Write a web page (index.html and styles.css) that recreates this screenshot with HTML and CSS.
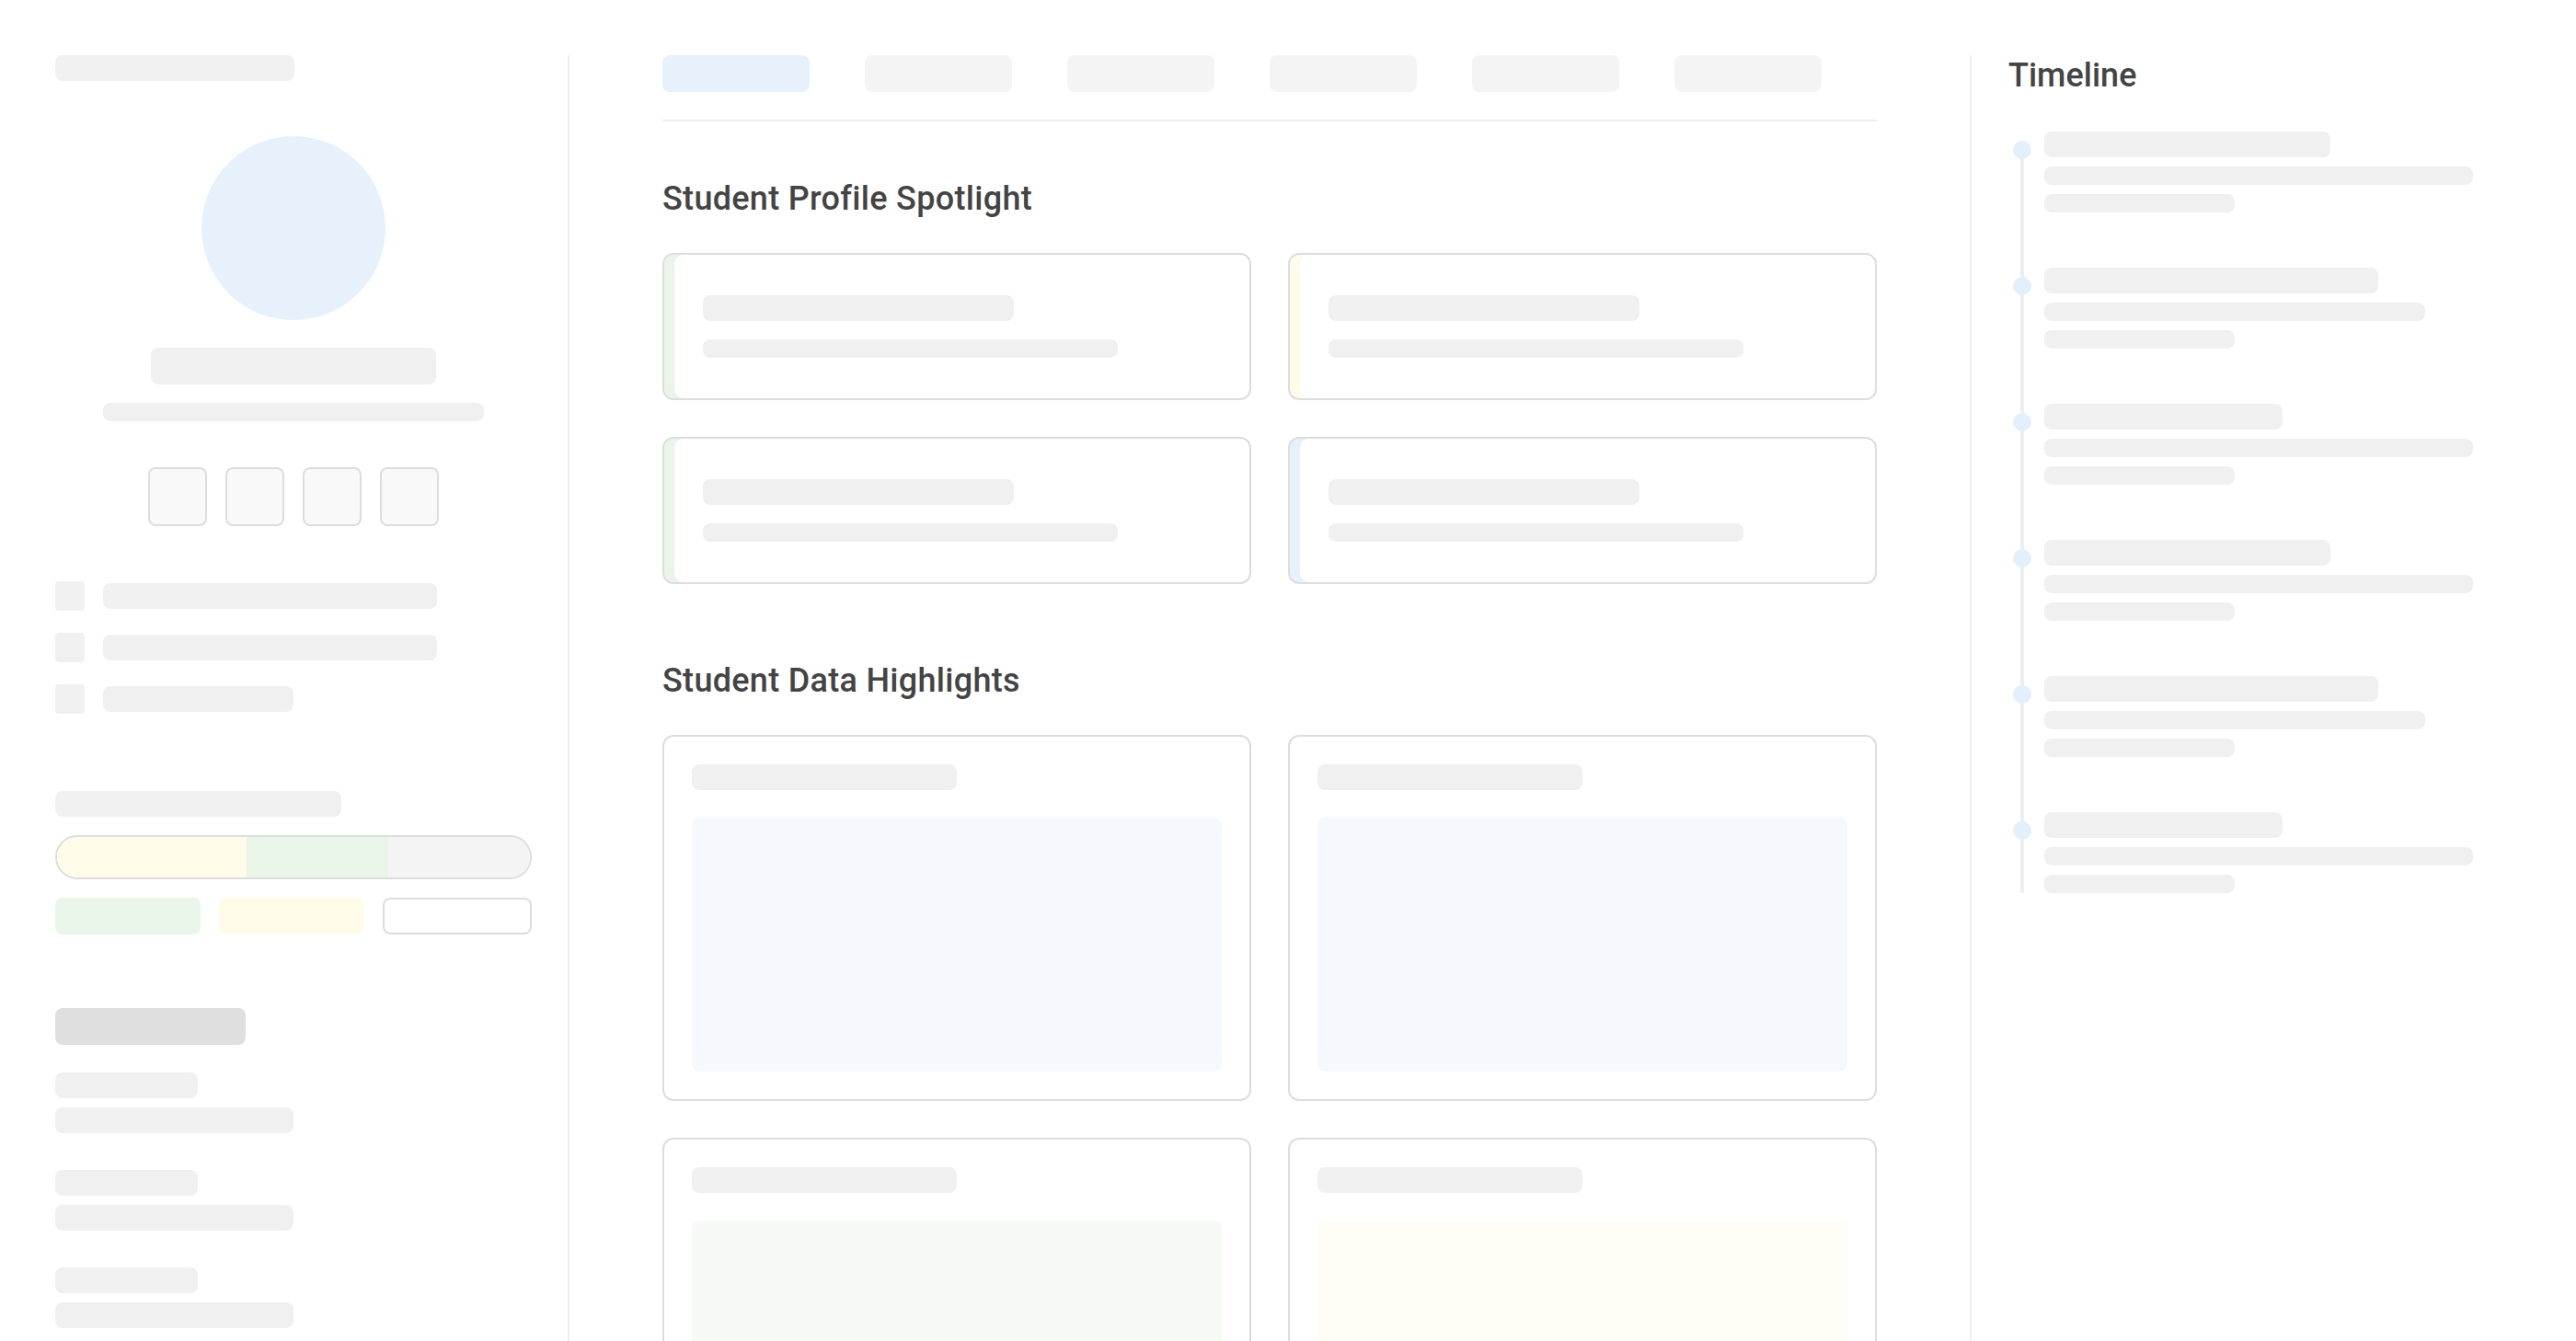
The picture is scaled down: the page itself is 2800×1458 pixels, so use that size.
FILE: index.html
```html
<!DOCTYPE html>
<html lang="en">
<head>
    <meta charset="UTF-8">
    <meta name="viewport" content="width=device-width, initial-scale=1.0">
    <title>Student Dashboard</title>
    <link rel="stylesheet" href="styles.css">
</head>
<body>
    <div class="page">
        <!-- Left column: profile -->
        <aside class="sidebar">
            <div class="sk sk-title"></div>
            <div class="avatar"></div>
            <div class="sk sk-name"></div>
            <div class="sk sk-sub"></div>
            <div class="actions">
                <span class="action"></span>
                <span class="action"></span>
                <span class="action"></span>
                <span class="action"></span>
            </div>
            <ul class="nav-list">
                <li><span class="nav-icon"></span><span class="sk nav-bar w363"></span></li>
                <li><span class="nav-icon"></span><span class="sk nav-bar w363"></span></li>
                <li><span class="nav-icon"></span><span class="sk nav-bar w207"></span></li>
            </ul>
            <div class="progress-block">
                <div class="sk sk-label"></div>
                <div class="progress">
                    <span class="seg seg-yellow" style="width: 40%"></span>
                    <span class="seg seg-green" style="width: 30%"></span>
                    <span class="seg seg-gray"></span>
                </div>
                <div class="chips">
                    <span class="chip chip-green"></span>
                    <span class="chip chip-yellow"></span>
                    <span class="chip chip-outline"></span>
                </div>
            </div>
            <div class="details">
                <div class="sk-dark"></div>
                <div class="detail"><div class="sk detail-key"></div><div class="sk detail-val"></div></div>
                <div class="detail"><div class="sk detail-key"></div><div class="sk detail-val"></div></div>
                <div class="detail"><div class="sk detail-key"></div><div class="sk detail-val"></div></div>
            </div>
        </aside>

        <!-- Middle column -->
        <main class="main">
            <nav class="tabs">
                <span class="tab active"></span>
                <span class="tab"></span>
                <span class="tab"></span>
                <span class="tab"></span>
                <span class="tab"></span>
                <span class="tab"></span>
            </nav>

            <section class="section">
                <h2>Student Profile Spotlight</h2>
                <div class="grid">
                    <div class="spot-card accent-green">
                        <div class="sk spot-title"></div>
                        <div class="sk spot-line"></div>
                    </div>
                    <div class="spot-card accent-yellow">
                        <div class="sk spot-title"></div>
                        <div class="sk spot-line"></div>
                    </div>
                    <div class="spot-card accent-green">
                        <div class="sk spot-title"></div>
                        <div class="sk spot-line"></div>
                    </div>
                    <div class="spot-card accent-blue">
                        <div class="sk spot-title"></div>
                        <div class="sk spot-line"></div>
                    </div>
                </div>
            </section>

            <section class="section">
                <h2>Student Data Highlights</h2>
                <div class="grid">
                    <div class="data-card">
                        <div class="sk data-title"></div>
                        <div class="chart chart-blue"></div>
                    </div>
                    <div class="data-card">
                        <div class="sk data-title"></div>
                        <div class="chart chart-blue"></div>
                    </div>
                    <div class="data-card">
                        <div class="sk data-title"></div>
                        <div class="chart chart-green"></div>
                    </div>
                    <div class="data-card">
                        <div class="sk data-title"></div>
                        <div class="chart chart-yellow"></div>
                    </div>
                </div>
            </section>
        </main>

        <!-- Right column: timeline -->
        <aside class="timeline-col">
            <h2>Timeline</h2>
            <ol class="timeline">
                <li><div class="sk tl-head w311"></div><div class="sk tl-line w466"></div><div class="sk tl-line w207"></div></li>
                <li><div class="sk tl-head w363"></div><div class="sk tl-line w414"></div><div class="sk tl-line w207"></div></li>
                <li><div class="sk tl-head w259"></div><div class="sk tl-line w466"></div><div class="sk tl-line w207"></div></li>
                <li><div class="sk tl-head w311"></div><div class="sk tl-line w466"></div><div class="sk tl-line w207"></div></li>
                <li><div class="sk tl-head w363"></div><div class="sk tl-line w414"></div><div class="sk tl-line w207"></div></li>
                <li><div class="sk tl-head w259"></div><div class="sk tl-line w466"></div><div class="sk tl-line w207"></div></li>
            </ol>
        </aside>
    </div>
</body>
</html>
```

FILE: styles.css
```css
* {
    box-sizing: border-box;
}
body {
    margin: 0;
    background: #ffffff;
    font-family: Roboto, "Liberation Sans", Arial, sans-serif;
    color: #444;
}
h2 {
    margin: 0;
    font-size: 36px;
    line-height: 44px;
    font-weight: 500;
    letter-spacing: 0.3px;
    color: #444;
}
.page {
    display: flex;
    padding: 60px 60px 60px;
}

/* skeleton bars */
.sk {
    background: #f0f0f0;
    border-radius: 8px;
}
.w207 { width: 207px; }
.w259 { width: 259px; }
.w311 { width: 311px; }
.w363 { width: 363px; }
.w414 { width: 414px; }
.w466 { width: 466px; }

/* sidebar */
.sidebar {
    flex: 0 0 559px;
    padding-right: 39px;
    border-right: 2px solid #efefef;
}
.sk-title {
    width: 260px;
    height: 28px;
    margin-bottom: 60px;
}
.avatar {
    width: 200px;
    height: 200px;
    margin: 0 auto 30px;
    border-radius: 50%;
    background: #e6f1fb;
}
.sk-name {
    width: 310px;
    height: 40px;
    margin: 0 auto 20px;
}
.sk-sub {
    width: 414px;
    height: 20px;
    margin: 0 auto 50px;
}
.actions {
    display: flex;
    justify-content: center;
    gap: 20px;
    margin-bottom: 60px;
}
.action {
    width: 64px;
    height: 64px;
    background: #f9f9f9;
    border: 2px solid #dddddd;
    border-radius: 8px;
}
.nav-list {
    list-style: none;
    margin: 0 0 84px;
    padding: 0;
    display: flex;
    flex-direction: column;
    gap: 24px;
}
.nav-list li {
    display: flex;
    align-items: center;
    gap: 20px;
    height: 32px;
}
.nav-icon {
    width: 32px;
    height: 32px;
    background: #f0f0f0;
    border-radius: 4px;
}
.nav-bar {
    height: 28px;
}
.progress-block {
    margin-bottom: 80px;
}
.sk-label {
    width: 311px;
    height: 28px;
    margin-bottom: 20px;
}
.progress {
    display: flex;
    height: 48px;
    border: 2px solid #dddddd;
    border-radius: 24px;
    overflow: hidden;
    margin-bottom: 20px;
}
.seg { display: block; height: 100%; }
.seg-yellow { background: #fffbe9; }
.seg-green { background: #eaf5ea; }
.seg-gray { background: #f4f4f4; flex: 1; }
.chips {
    display: flex;
    gap: 20px;
}
.chip {
    flex: 1;
    height: 40px;
    border-radius: 8px;
}
.chip-green { background: #eaf5ea; }
.chip-yellow { background: #fffbe9; }
.chip-outline {
    background: #fff;
    border: 2px solid #dddddd;
}
.sk-dark {
    width: 207px;
    height: 40px;
    background: #dfdfdf;
    border-radius: 8px;
    margin-bottom: 30px;
}
.detail {
    margin-bottom: 40px;
}
.detail-key {
    width: 155px;
    height: 28px;
    margin-bottom: 10px;
}
.detail-val {
    width: 259px;
    height: 28px;
}

/* main column */
.main {
    flex: 1;
    padding: 0 101px;
}
.tabs {
    display: flex;
    gap: 60px;
    padding-bottom: 30px;
    border-bottom: 2px solid #eeeeee;
}
.tab {
    width: 160px;
    height: 40px;
    border-radius: 8px;
    background: #f4f4f4;
}
.tab.active {
    background: #e6f1fb;
}
.section {
    margin-top: 83px;
}
.section:first-of-type {
    margin-top: 62px;
}
.section h2 {
    margin-bottom: 37px;
}
.grid {
    display: grid;
    grid-template-columns: 1fr 1fr;
    gap: 40px;
}
.spot-card {
    height: 160px;
    padding: 44px 40px 44px 42px;
    border: 2px solid #dddddd;
    border-radius: 12px;
}
.accent-green { box-shadow: inset 11px 0 0 #eaf5ea; }
.accent-yellow { box-shadow: inset 11px 0 0 #fffbe9; }
.accent-blue { box-shadow: inset 11px 0 0 #e6f1fb; }
.spot-title {
    width: 338px;
    height: 28px;
    margin-bottom: 20px;
}
.spot-line {
    width: 451px;
    height: 20px;
}
.data-card {
    padding: 30px;
    border: 2px solid #dddddd;
    border-radius: 12px;
}
.data-title {
    width: 50%;
    height: 28px;
    margin-bottom: 30px;
}
.chart {
    height: 276px;
    border-radius: 8px;
}
.chart-blue { background: #f5f9fd; }
.chart-green { background: #f7f9f7; }
.chart-yellow { background: #fffdf6; }

/* timeline column */
.timeline-col {
    flex: 0 0 599px;
    padding-left: 40px;
    border-left: 2px solid #efefef;
}
.timeline-col h2 {
    margin-bottom: 39px;
    letter-spacing: 0;
}
.timeline {
    position: relative;
    list-style: none;
    margin: 0;
    padding: 0 0 0 39px;
    display: flex;
    flex-direction: column;
    gap: 60px;
}
.timeline::before {
    content: "";
    position: absolute;
    left: 13px;
    top: 20px;
    bottom: 0;
    width: 4px;
    background: #eeeeee;
}
.timeline li {
    position: relative;
    display: flex;
    flex-direction: column;
    gap: 10px;
}
.timeline li::before {
    content: "";
    position: absolute;
    left: -34px;
    top: 10px;
    width: 20px;
    height: 20px;
    border-radius: 50%;
    background: #e3f0fb;
}
.tl-head { height: 28px; }
.tl-line { height: 20px; }
```
